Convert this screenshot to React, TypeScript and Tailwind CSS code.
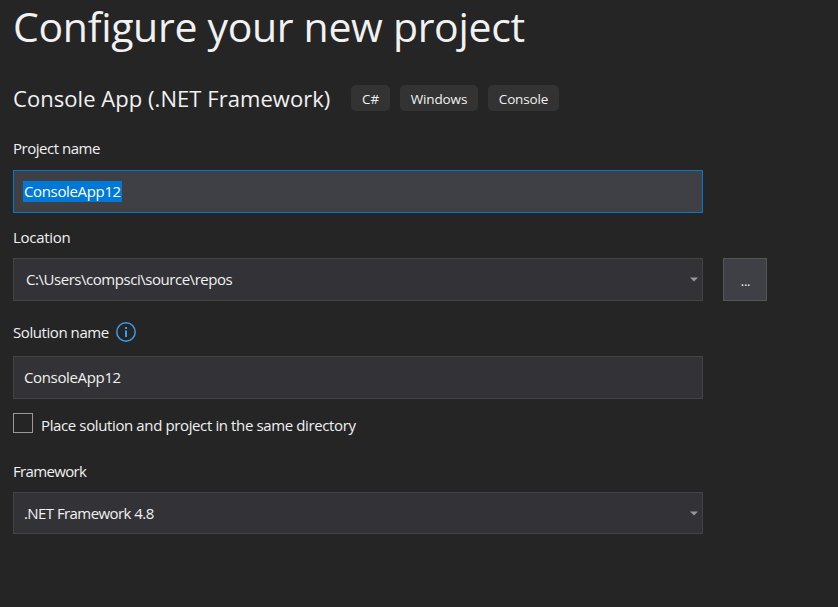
import type { ReactNode } from "react";

function Label({ children, className }: { children: ReactNode; className: string }) {
  return <div className={`h-5 text-[15px] leading-5 whitespace-nowrap ${className}`}>{children}</div>;
}

function Caret() {
  return (
    <svg width="8" height="5" viewBox="0 0 8 5" className="mr-1 shrink-0" fill="#999999">
      <path d="M0 .5h8L4 4.5z" />
    </svg>
  );
}

function Tag({ children, className }: { children: ReactNode; className: string }) {
  return (
    <span className={`flex h-[26px] items-center justify-center rounded-[5px] bg-[#333333] pt-0.5 text-[13.5px] tracking-[-0.15px] whitespace-nowrap ${className}`}>
      {children}
    </span>
  );
}

export default function App() {
  return (
    <main className="h-[607px] w-[838px] bg-[#252526] pl-[13px] font-['Open_Sans','Noto_Sans',sans-serif] text-[15px] text-[#f1f1f1]">
      <h1 className="h-[52px] text-[41px] leading-[52px] tracking-[-0.32px] whitespace-nowrap">Configure your new project</h1>

      <div className="mt-[33px] flex h-[26px] items-center">
        <h2 className="w-[338px] text-[22px] leading-[26px] tracking-[0.05px] whitespace-nowrap">Console App (.NET Framework)</h2>
        <div className="flex gap-2.5">
          <Tag className="w-[39px]">C#</Tag>
          <Tag className="w-[78px]">Windows</Tag>
          <Tag className="w-[71px]">Console</Tag>
        </div>
      </div>

      <div className="mt-[27px]"><Label className="tracking-[-0.48px]">Project name</Label></div>
      <div className="mt-3 flex h-[43px] w-[690px] items-center border border-[#007acc] bg-[#3f3f46] pl-[9px]">
        <span className="h-[21px] w-[99px] bg-[#0078d7] pl-px leading-[21px] tracking-[-0.35px] whitespace-nowrap text-white">ConsoleApp12</span>
      </div>

      <div className="mt-3.5"><Label className="tracking-[-0.3px]">Location</Label></div>
      <div className="mt-[11px] flex gap-5">
        <div className="flex h-[43px] w-[690px] items-center justify-between border border-[#434346] bg-[#333337] pl-3">
          <span className="tracking-[-0.46px] whitespace-nowrap">C:\Users\compsci\source\repos</span>
          <Caret />
        </div>
        <button className="flex h-[43px] w-11 items-center justify-center border border-[#555555] bg-[#3f3f46] pt-[5px] pl-px text-[13px] tracking-[-0.3px]">...</button>
      </div>

      <div className="mt-[21px] flex h-5 items-center">
        <div className="w-[103px]"><Label className="tracking-[-0.43px]">Solution name</Label></div>
        <svg width="20" height="20" viewBox="0 0 20 20" fill="none" stroke="#3b9ce8" strokeWidth="1.5">
          <circle cx="10" cy="10" r="9.2" />
          <path d="M10 8.5V15M10 5v2" strokeWidth="2" />
        </svg>
      </div>
      <div className="mt-3.5 flex h-[43px] w-[690px] items-center border border-[#434346] bg-[#333337] pl-2.5">
        <span className="tracking-[-0.35px] whitespace-nowrap">ConsoleApp12</span>
      </div>

      <div className="mt-3.5 flex h-5 gap-2">
        <span className="size-5 border border-[#999999]" />
        <div className="pt-0.5"><Label className="tracking-[-0.38px]">Place solution and project in the same directory</Label></div>
      </div>

      <div className="mt-7"><Label className="tracking-[-0.65px]">Framework</Label></div>
      <div className="mt-[11px] flex h-[42px] w-[690px] items-center justify-between border border-[#434346] bg-[#333337] pl-2.5">
        <span className="tracking-[-0.57px] whitespace-nowrap">.NET Framework 4.8</span>
        <Caret />
      </div>
    </main>
  );
}
